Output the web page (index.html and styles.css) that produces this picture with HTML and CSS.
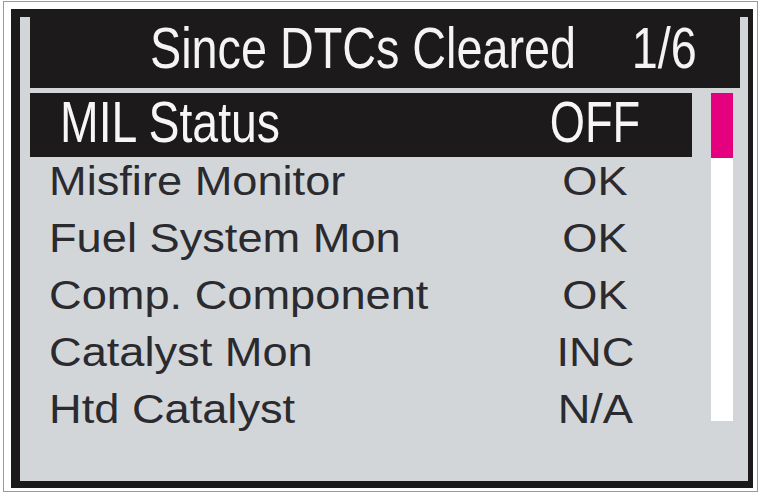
FILE: index.html
```
<!DOCTYPE html>
<html lang="en">
<head>
<meta charset="utf-8">
<title>Since DTCs Cleared</title>
<link rel="stylesheet" href="styles.css">
</head>
<body>
<div class="page">
  <div class="frame">
    <div class="screen">
      <div class="title-bar">
        <span class="title-text"><span>Since DTCs Cleared</span><span>1/6</span></span>
      </div>
      <div class="body">
        <div class="list">
          <div class="row selected">
            <span class="label"><span class="sel-scale">MIL Status</span></span>
            <span class="value"><span class="sel-scale-v">OFF</span></span>
          </div>
          <div class="row">
            <span class="label"><span class="wide">Misfire Monitor</span></span>
            <span class="value"><span class="wide-v">OK</span></span>
          </div>
          <div class="row">
            <span class="label"><span class="wide">Fuel System Mon</span></span>
            <span class="value"><span class="wide-v">OK</span></span>
          </div>
          <div class="row">
            <span class="label"><span class="wide">Comp. Component</span></span>
            <span class="value"><span class="wide-v">OK</span></span>
          </div>
          <div class="row">
            <span class="label"><span class="wide">Catalyst Mon</span></span>
            <span class="value"><span class="wide-v">INC</span></span>
          </div>
          <div class="row">
            <span class="label"><span class="wide">Htd Catalyst</span></span>
            <span class="value"><span class="wide-v">N/A</span></span>
          </div>
        </div>
        <div class="scrollbar">
          <div class="thumb"></div>
        </div>
      </div>
    </div>
  </div>
</div>
</body>
</html>
```
FILE: styles.css
```
html, body {
  margin: 0;
  padding: 0;
  background: #ffffff;
  overflow: hidden;
}

body {
  font-family: "Liberation Sans", Arial, sans-serif;
}

.page {
  margin: 1px 1px 1px 3px;
  width: 753px;
  height: 489px;
  border: 1px solid #9a9a9a;
  padding: 7px 0 0 7px;
  box-sizing: content-box;
  display: flex;
  align-items: flex-start;
}

.page {
  width: 746px;
  height: 482px;
}

.frame {
  width: 742px;
  height: 479px;
  box-sizing: border-box;
  padding: 8px 5px 7px 9px;
  background: #1d1a1b;
  display: flex;
}

.screen {
  flex: 1;
  background: #d3d6d9;
  display: flex;
  flex-direction: column;
  padding: 0 8px 0 10px;
}

.title-bar {
  height: 71px;
  background: #1d1a1b;
  color: #f4f4f4;
  display: flex;
  justify-content: flex-end;
  align-items: flex-start;
  padding-right: 43px;
  font-size: 57px;
  line-height: 62px;
  white-space: nowrap;
}

.title-text {
  display: inline-flex;
  gap: 68px;
  transform: scaleX(0.82);
  transform-origin: right center;
}

.body {
  margin-top: 5px;
  display: flex;
  align-items: flex-start;
  gap: 19px;
}

.list {
  width: 662px;
  display: flex;
  flex-direction: column;
}

.row {
  display: flex;
  align-items: flex-start;
  height: 57px;
  font-size: 40px;
  line-height: 48px;
  color: #2a2a2f;
  padding-left: 19px;
  padding-right: 37px;
  white-space: nowrap;
}

.row.selected {
  height: 64px;
  font-size: 58px;
  line-height: 58px;
  background: #1d1a1b;
  color: #f6f6f6;
  padding-left: 30px;
}

.label {
  flex: 1;
}

.value {
  width: 120px;
  text-align: center;
}

.wide {
  display: inline-block;
  transform: scaleX(1.13);
  transform-origin: left center;
}

.wide-v {
  display: inline-block;
  transform: scaleX(1.13);
  transform-origin: center center;
}

.sel-scale {
  display: inline-block;
  transform: scaleX(0.8);
  transform-origin: left center;
}

.sel-scale-v {
  display: inline-block;
  transform: scaleX(0.78);
  transform-origin: center center;
}

.scrollbar {
  width: 22px;
  height: 328px;
  background: #ffffff;
  display: flex;
  flex-direction: column;
}

.thumb {
  height: 65px;
  background: #e5007f;
}
```
